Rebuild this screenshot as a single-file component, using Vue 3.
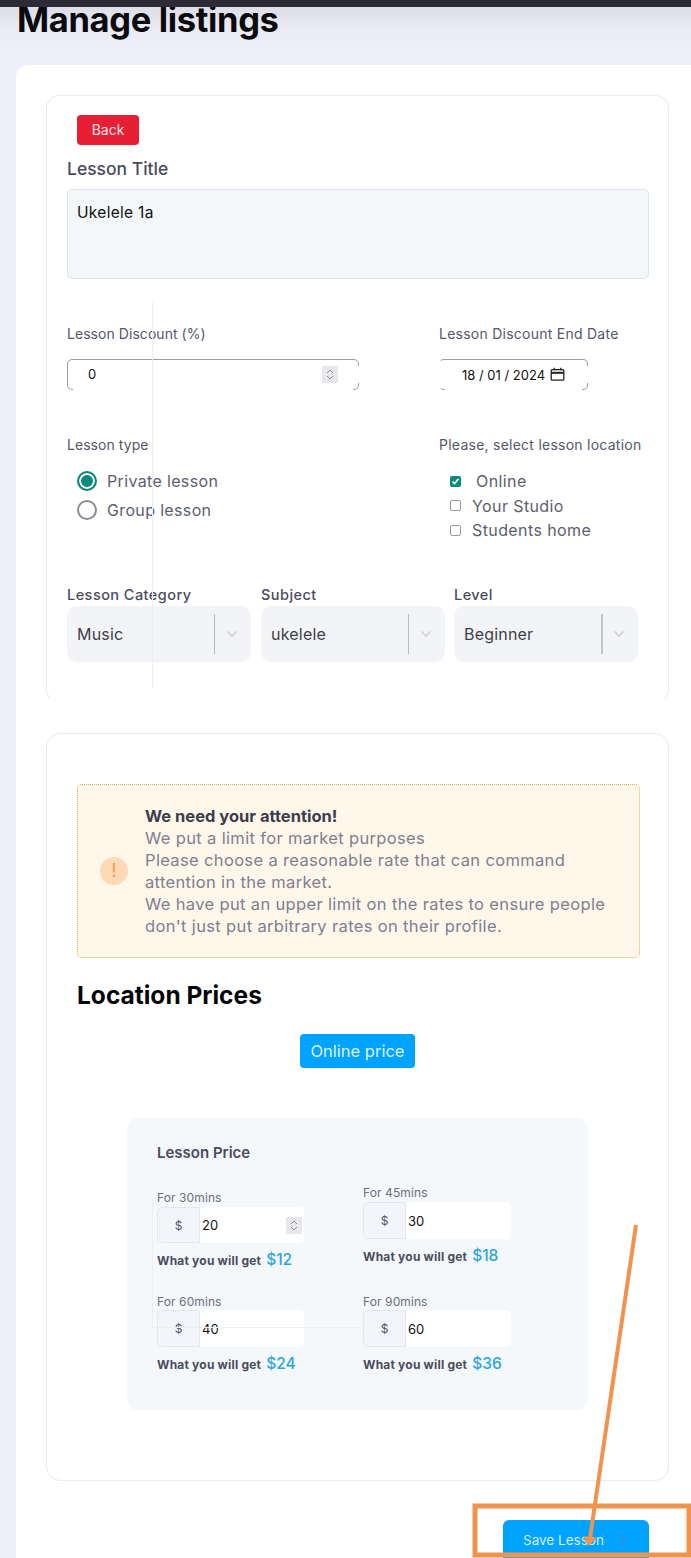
<script setup>
const alertLines = [
  'We put a limit for market purposes',
  'Please choose a reasonable rate that can command',
  'attention in the market.',
  'We have put an upper limit on the rates to ensure people',
  "don't just put arbitrary rates on their profile."
]
const selects = [
  { label: 'Lesson Category', value: 'Music' },
  { label: 'Subject', value: 'ukelele' },
  { label: 'Level', value: 'Beginner', thick: true }
]
const locations = [
  { label: 'Online', checked: true },
  { label: 'Your Studio' },
  { label: 'Students home' }
]
const prices = [
  { label: 'For 30mins', value: '20', get: '$12', cls: 'f30', spin: true },
  { label: 'For 45mins', value: '30', get: '$18', cls: 'f45' },
  { label: 'For 60mins', value: '40', get: '$24', cls: 'f60' },
  { label: 'For 90mins', value: '60', get: '$36', cls: 'f90' }
]
</script>

<template>
  <div class="page">
    <div class="topbar"></div>
    <header class="head"><h1>Manage listings</h1></header>

    <main class="sheet">
      <section class="card first">
        <button class="back">Back</button>
        <div class="title-label">Lesson Title</div>
        <div class="textarea">Ukelele 1a</div>

        <div class="two discount">
          <div>
            <div class="small-label narrow">Lesson Discount (%)</div>
            <div class="outlined wide">
              <span class="zero">0</span>
              <span class="spin">
                <svg width="10" height="13" viewBox="0 0 10 13" fill="none" stroke="#8d8d95" stroke-width="1"><path d="M2 5l3-3 3 3M2 8l3 3 3-3"/></svg>
              </span>
            </div>
          </div>
          <div>
            <div class="small-label">Lesson Discount End Date</div>
            <div class="outlined date">
              <span>18 / 01 / 2024</span>
              <svg width="15" height="15" viewBox="0 0 15 15" fill="none" stroke="#222" stroke-width="1.3"><rect x="1.2" y="2.6" width="12.6" height="10.6" rx="1"/><path d="M1.2 5.8h12.6" stroke-width="2"/><path d="M4.2 .8v2.4M10.8 .8v2.4"/></svg>
            </div>
          </div>
        </div>

        <div class="two options">
          <div>
            <div class="small-label narrow">Lesson type</div>
            <div class="radios">
              <div class="radio-row"><span class="radio on"></span>Private lesson</div>
              <div class="radio-row"><span class="radio"></span>Group lesson</div>
            </div>
          </div>
          <div>
            <div class="small-label">Please, select lesson location</div>
            <div class="checks">
              <div v-for="l in locations" :key="l.label" class="check-row" :class="{ active: l.checked }">
                <span class="check" :class="{ on: l.checked }">
                  <svg v-if="l.checked" width="9" height="9" viewBox="0 0 9 9" fill="none" stroke="#fff" stroke-width="1.6"><path d="M1.5 4.6l2 2 4-4.6"/></svg>
                </span>
                {{ l.label }}
              </div>
            </div>
          </div>
        </div>

        <div class="selects">
          <div v-for="s in selects" :key="s.label" class="select-wrap">
            <div class="select-label">{{ s.label }}</div>
            <div class="select">
              <span class="select-value">{{ s.value }}</span>
              <span class="divider" :class="{ thick: s.thick }"></span>
              <svg class="chev" width="12" height="8" viewBox="0 0 12 8" fill="none" stroke="#cfcfd4" stroke-width="1.6"><path d="M1.5 1.5L6 6l4.5-4.5"/></svg>
            </div>
          </div>
        </div>
      </section>

      <section class="card second">
        <div class="alert">
          <span class="alert-icon">!</span>
          <div class="alert-text">
            <div class="alert-title">We need your attention!</div>
            <div v-for="line in alertLines" :key="line">{{ line }}</div>
          </div>
        </div>
        <h2>Location Prices</h2>
        <div class="center"><button class="online">Online price</button></div>

        <div class="panel">
          <div class="panel-title">Lesson Price</div>
          <div class="price-grid">
            <div v-for="p in prices" :key="p.label" class="field" :class="p.cls">
              <div class="field-label">{{ p.label }}</div>
              <div class="group">
                <span class="addon">$</span>
                <span class="amount">{{ p.value }}</span>
                <span v-if="p.spin" class="spin small">
                  <svg width="10" height="13" viewBox="0 0 10 13" fill="none" stroke="#8d8d95" stroke-width="1"><path d="M2 5l3-3 3 3M2 8l3 3 3-3"/></svg>
                </span>
              </div>
              <div class="get">What you will get <span>{{ p.get }}</span></div>
            </div>
          </div>
        </div>
      </section>

      <button class="save">Save Lesson
        <svg width="9" height="14" viewBox="0 0 9 14" fill="none" stroke="#2f8fd0" stroke-width="2"><path d="M1.5 1.5L7 7l-5.5 5.5"/></svg>
      </button>
    </main>

    <svg class="overlay" width="691" height="1558" viewBox="0 0 691 1558" fill="none">
      <path d="M152.5 302V688M152.5 1198V1327.5H365" stroke="#eceef2" stroke-width="1"/>
      <rect x="475" y="1506" width="214" height="49" stroke="#f0934c" stroke-width="5"/>
      <path d="M636 1225L590 1538" stroke="#f0934c" stroke-width="4"/>
      <path d="M583 1536L597 1538L588 1546Z" fill="#f0934c"/>
    </svg>
  </div>
</template>

<style>
html, body { margin: 0; background: #eeeff9; }
</style>

<style scoped>
.page {
  position: relative;
  width: 691px;
  height: 1558px;
  overflow: hidden;
  background: linear-gradient(#d9d9e2 0, #e9e9f3 25px, #eeeff9 50px);
  font-family: Inter, "Noto Sans", sans-serif;
  color: #3f4254;
}
.topbar { position: relative; z-index: 2; height: 7px; background: #2b2a35; }
.head { display: flow-root; height: 58px; padding-left: 17px; }
h1 {
  margin: -9px 0 0;
  font-size: 34.5px;
  line-height: 44px;
  font-weight: 700;
  letter-spacing: -0.35px;
  color: #0b0b0f;
}
.sheet {
  margin-left: 16px;
  height: 1493px;
  box-sizing: border-box;
  padding: 30px 22px 0 30px;
  background: #fff;
  border-radius: 12px 0 0 0;
}
.card {
  box-sizing: border-box;
  border: 1px solid #e9e9ee;
  border-radius: 14px;
  background: #fff;
}
.first {
  height: 608px;
  padding: 19px 20px 0;
  border-bottom-color: transparent;
}
.back {
  display: block;
  width: 62px;
  height: 30px;
  margin-left: 10px;
  padding: 0;
  border: 0;
  border-radius: 4px;
  background: #e61f34;
  color: #fbe3e5;
  font: 400 14px/28px Inter, sans-serif;
}
.title-label { margin-top: 12px; font-size: 17.5px; line-height: 24px; font-weight: 500; color: #4a4c5e; }
.textarea {
  box-sizing: border-box;
  height: 90px;
  margin-top: 8px;
  width: 582px;
  padding: 13px 9px;
  background: #f4f7fa;
  border: 1px solid #dfe3e8;
  border-radius: 5px;
  font-size: 15.5px;
  letter-spacing: 0.3px;
  line-height: 20px;
  color: #111;
}
.two { display: grid; grid-template-columns: 372px 1fr; }
.discount { margin-top: 45px; }
.options { margin-top: 45px; height: 107px; }
.small-label { font-size: 14px; letter-spacing: 0.25px; line-height: 20px; color: #55576a; white-space: nowrap; }
.small-label.narrow { letter-spacing: 0.05px; }
.outlined {
  position: relative;
  box-sizing: border-box;
  display: flex;
  align-items: center;
  height: 31px;
  margin-top: 15px;
  border: 1px solid #9c9ca2;
  border-radius: 5px;
  font-size: 13px;
  color: #111;
}
.outlined::before {
  content: "";
  position: absolute;
  left: 5px; right: 5px; bottom: -1px;
  height: 1px;
  background: #fff;
}
.outlined::after {
  content: "";
  position: absolute;
  right: -1px; top: 6px; bottom: 6px;
  width: 1px;
  background: #fff;
}
.wide { width: 292px; padding: 0 20px; justify-content: space-between; }
.date { width: 149px; padding-left: 22px; gap: 5px; border-left-color: #fff; }
.zero { font-size: 13px; margin-top: -2px; }
.spin {
  display: flex;
  align-items: center;
  justify-content: center;
  width: 16px;
  height: 17px;
  background: #e8e8ec;
}
.radios { margin-top: 14px; display: flex; flex-direction: column; gap: 5px; }
.radio-row {
  display: flex;
  align-items: center;
  gap: 10px;
  margin-left: 10px;
  height: 24px;
  font-size: 16px;
  letter-spacing: 0.35px;
  color: #5c5e6e;
}
.radio {
  box-sizing: border-box;
  width: 20px;
  height: 20px;
  border: 2px solid #8b8b93;
  border-radius: 50%;
  background: #fff;
}
.radio.on {
  border-color: #0a8a78;
  background: #0a8a78;
  box-shadow: inset 0 0 0 2px #fff;
}
.checks { margin-top: 14px; display: flex; flex-direction: column; }
.check-row {
  display: flex;
  align-items: center;
  gap: 11px;
  margin-left: 11px;
  height: 24.5px;
  font-size: 16px;
  letter-spacing: 0.4px;
  color: #5c5e6e;
}
.check-row.active { gap: 15px; }
.check {
  box-sizing: border-box;
  display: flex;
  align-items: center;
  justify-content: center;
  width: 11px;
  height: 11px;
  border: 1.5px solid #9a9aa2;
  border-radius: 2px;
}
.check.on { border: 0; background: #0a8a78; }
.selects { display: flex; gap: 10px; margin-top: 43px; }
.select-wrap { width: 184px; }
.select-wrap:last-child { margin-left: -1px; }
.select-label { font-size: 14.5px; letter-spacing: 0.45px; line-height: 20px; margin-bottom: 1px; font-weight: 500; color: #4a4c5e; white-space: nowrap; }
.select {
  display: flex;
  align-items: center;
  height: 56px;
  padding-left: 10px;
  background: #f3f4f8;
  border-radius: 10px;
}
.select-value { flex: 1; font-size: 16px; letter-spacing: 0.2px; color: #3f4148; }
.divider { width: 1px; height: 40px; background: #b9b9c0; margin-right: 11px; }
.divider.thick { width: 2px; margin-right: 10px; background: #c4c4ca; }
.chev { margin-right: 13px; }

.second {
  height: 748px;
  margin-top: 30px;
  padding: 50px 0 0 30px;
}
.alert {
  box-sizing: border-box;
  display: flex;
  align-items: center;
  gap: 17px;
  width: 563px;
  height: 174px;
  padding-left: 22px;
  background: #fff7ea;
  border: 1px dotted #dcb14f;
  border-radius: 5px;
}
.alert-icon {
  flex: none;
  width: 28px;
  height: 28px;
  border-radius: 50%;
  background: #fdd9b5;
  color: #f2a14e;
  text-align: center;
  font-size: 19px;
  line-height: 28px;
}
.alert-text { font-size: 16.5px; letter-spacing: 0.35px; line-height: 22px; color: #7e8090; white-space: nowrap; }
.alert-title { font-weight: 700; color: #3c3d4d; letter-spacing: 0; }
h2 { margin: 21px 0 0; font-size: 24.5px; line-height: 32px; font-weight: 700; color: #050507; }
.center { margin: 23px 0 0 -30px; display: flex; justify-content: center; }
.online {
  width: 115px;
  height: 34px;
  padding: 0;
  border: 0;
  border-radius: 4px;
  background: #00a3ff;
  color: #dff4ff;
  font: 400 16.5px/34px Inter, sans-serif;
}
.panel {
  box-sizing: border-box;
  width: 461px;
  height: 292px;
  margin: 50px 0 0 50px;
  padding: 23px 0 0 30px;
  background: #f5f8fb;
  border-radius: 10px;
}
.panel-title { font-size: 15px; line-height: 24px; font-weight: 600; color: #4a4c5e; }
.price-grid {
  display: grid;
  grid-template-columns: 206px 1fr;
  row-gap: 20px;
  margin-top: 19px;
}
.field-label { font-size: 12px; letter-spacing: 0.1px; line-height: 18px; color: #6c6e7e; }
.f30 { padding-top: 5px; }
.f30 .group { width: 147px; height: 36px; }
.f30 .get { margin-top: 5px; }
.group {
  display: flex;
  align-items: center;
  width: 148px;
  height: 37px;
  background: #fff;
  border-radius: 5px;
}
.f60 .group { width: 147px; }
.addon {
  box-sizing: border-box;
  flex: none;
  align-self: stretch;
  width: 43px;
  display: flex;
  align-items: center;
  justify-content: center;
  background: #f2f5f9;
  border: 1px solid #e3e6ea;
  border-radius: 5px 0 0 5px;
  font-size: 12px;
  color: #55576a;
}
.amount { flex: 1; padding-left: 2px; font-size: 13px; color: #111; }
.spin.small { margin-right: 2px; }
.f60 .field-label, .f90 .field-label { margin-bottom: -1px; }
.get {
  margin-top: 5px;
  font-size: 12px;
  letter-spacing: 0.2px;
  line-height: 24px;
  font-weight: 700;
  color: #4a4c5e;
  white-space: nowrap;
}
.get span { margin-left: 2px; font-size: 15.5px; letter-spacing: 0; font-weight: 500; color: #2aa5de; }

.save {
  display: flex;
  align-items: center;
  gap: 14px;
  width: 146px;
  height: 60px;
  margin: 39px 0 0 457px;
  padding: 0 0 20px 20px;
  border: 0;
  border-radius: 6px;
  background: #00a3ff;
  color: #d5f0ff;
  font: 400 13.5px Inter, sans-serif;
}
.overlay { position: absolute; left: 0; top: 0; z-index: 3; pointer-events: none; }
</style>
